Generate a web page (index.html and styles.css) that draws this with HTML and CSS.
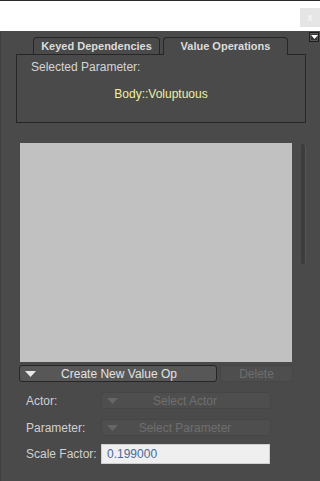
FILE: index.html
```html
<!DOCTYPE html>
<html>
<head>
<meta charset="utf-8">
<link rel="stylesheet" href="styles.css">
</head>
<body>
<div class="titlebar">
  <div class="close">x</div>
</div>
<div class="panel">
  <div class="menu-btn"><svg width="7" height="4" viewBox="0 0 7 4"><path d="M0 0H7L3.5 4Z" fill="#fff"/></svg></div>
  <div class="tabs">
    <div class="tab tab-keyed">Keyed Dependencies</div>
    <div class="tab tab-active">Value Operations</div>
  </div>
  <div class="tabbox">
    <div class="sel-label">Selected Parameter:</div>
    <div class="sel-value">Body::Voluptuous</div>
  </div>
  <div class="listrow">
    <div class="list"></div>
    <div class="scroll"></div>
  </div>
  <div class="btnrow">
    <div class="btn btn-create"><svg class="tri" width="11" height="6" viewBox="0 0 11 6"><path d="M0 0H11L5.5 6Z" fill="#e8e8e8"/></svg><span class="btn-text">Create New Value Op</span></div>
    <div class="btn btn-delete">Delete</div>
  </div>
  <div class="field">
    <div class="flabel">Actor:</div>
    <div class="btn btn-sel"><svg class="tri" width="11" height="6" viewBox="0 0 11 6"><path d="M0 0H11L5.5 6Z" fill="#666"/></svg><span class="btn-text">Select Actor</span></div>
  </div>
  <div class="field">
    <div class="flabel">Parameter:</div>
    <div class="btn btn-sel"><svg class="tri" width="11" height="6" viewBox="0 0 11 6"><path d="M0 0H11L5.5 6Z" fill="#666"/></svg><span class="btn-text">Select Parameter</span></div>
  </div>
  <div class="field field-input">
    <div class="flabel">Scale Factor:</div>
    <div class="input">0.199000</div>
  </div>
</div>
</body>
</html>
```

FILE: styles.css
```css
* { box-sizing: border-box; }
html, body { margin: 0; padding: 0; }
body {
  width: 320px;
  height: 481px;
  overflow: hidden;
  background: #fff;
  font-family: "Liberation Sans", Arial, sans-serif;
  font-size: 12px;
}
.titlebar {
  height: 31px;
  border-top: 1px solid #2a2a2a;
  background: #fff;
  display: flex;
  justify-content: flex-end;
  align-items: flex-start;
  padding-top: 7px;
}
.close {
  width: 20px;
  height: 19px;
  background: #e5e5e5;
  color: #f6f6f6;
  font-size: 10px;
  font-weight: bold;
  display: flex;
  align-items: center;
  justify-content: center;
}
.panel {
  position: relative;
  height: 450px;
  background: #4a4a4a;
  border-left: 1px solid #404040;
  display: flex;
  flex-direction: column;
}
.menu-btn {
  position: absolute;
  top: 1px;
  right: 1px;
  width: 10px;
  height: 10px;
  background: #333;
  border: 1px solid #1e1e1e;
  box-shadow: inset 0 0 0 1px #555;
  display: flex;
  align-items: center;
  justify-content: center;
}
.tabs {
  display: flex;
  align-items: flex-end;
  gap: 3px;
  margin-top: 5px;
  padding-left: 32px;
  height: 18px;
  position: relative;
  z-index: 1;
}
.tab {
  height: 17px;
  border: 1px solid #262626;
  border-bottom: none;
  border-radius: 4px 4px 0 0;
  background: #4a4a4a;
  color: #dcdcdc;
  font-weight: bold;
  font-size: 11px;
  display: flex;
  align-items: center;
  justify-content: center;
}
.tab-keyed { width: 127px; }
.tab-active { width: 125px; height: 18px; padding-bottom: 1px; margin-bottom: -1px; }
.tabbox {
  margin-left: 15px;
  width: 290px;
  height: 69px;
  border: 1px solid #262626;
  display: flex;
  flex-direction: column;
  color: #d6d6d6;
}
.sel-label {
  margin-top: 5px;
  margin-left: 14px;
  line-height: 14px;
}
.sel-value {
  margin-top: 13px;
  color: #f1efa6;
  text-align: center;
  line-height: 14px;
}
.listrow {
  display: flex;
  align-items: flex-start;
  margin-top: 20px;
  margin-left: 19px;
  gap: 9px;
}
.list {
  width: 272px;
  height: 219px;
  background: #c1c1c1;
}
.scroll {
  margin-top: 1px;
  width: 5px;
  height: 120px;
  border-radius: 3px;
  background: #3c3c3c;
  border-right: 1px solid #555;
}
.btnrow {
  display: flex;
  margin-top: 3px;
  margin-left: 18px;
  gap: 3px;
}
.btn {
  height: 17px;
  border-radius: 3px;
  display: flex;
  align-items: center;
}
.btn-create {
  width: 198px;
  background: #575757;
  border: 1px solid #262626;
  color: #e2e2e2;
}
.tri { margin-left: 5px; flex: none; }
.btn-text { flex: 1; text-align: center; padding-right: 14px; }
.btn-create .btn-text { padding-right: 14px; }
.btn-delete {
  width: 73px;
  background: #4e4e4e;
  border: 1px solid #464646;
  color: #6f6f6f;
  justify-content: center;
}
.field {
  display: flex;
  align-items: center;
  margin-left: 25px;
  margin-top: 10px;
  height: 17px;
}
.flabel {
  width: 75px;
  color: #d0d0d0;
}
.btn-sel {
  width: 170px;
  background: #4e4e4e;
  border: 1px solid #464646;
  color: #6f6f6f;
}
.btn-sel .btn-text { padding-right: 18px; }
.field-input { margin-top: 8px; height: 20px; }
.input {
  width: 169px;
  height: 20px;
  background: #efefef;
  border: 1px solid #cfcfcf;
  color: #4a6898;
  padding-left: 5px;
  display: flex;
  align-items: center;
}
```
